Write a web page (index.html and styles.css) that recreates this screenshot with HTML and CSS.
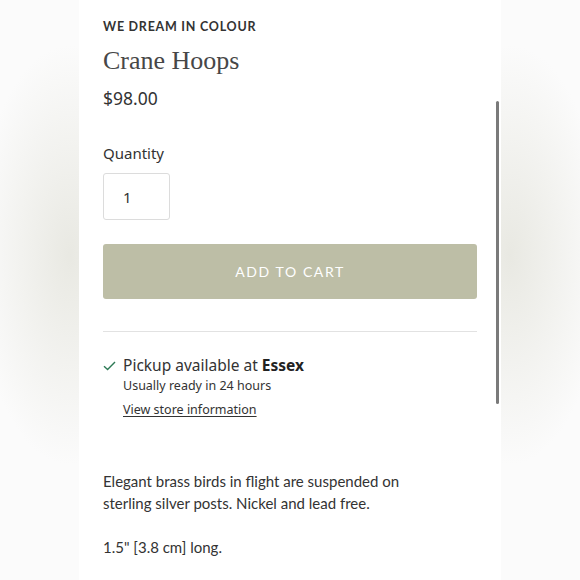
FILE: index.html
```html
<!DOCTYPE html>
<html lang="en">
<head>
<meta charset="utf-8">
<title>Crane Hoops</title>
<link rel="stylesheet" href="styles.css">
</head>
<body>
<div class="stage">
  <main class="panel">
    <p class="vendor">WE DREAM IN COLOUR</p>
    <h1 class="title">Crane Hoops</h1>
    <p class="price">$98.00</p>

    <div class="qty">
      <label class="qty-label" for="qty">Quantity</label>
      <input class="qty-input" id="qty" type="text" value="1">
    </div>

    <button class="cart-btn" type="button">ADD TO CART</button>

    <hr class="divider">

    <div class="pickup">
      <svg class="check" width="13" height="10" viewBox="0 0 13 10" aria-hidden="true">
        <path d="M1 5.2 L4.6 8.6 L12 1" fill="none" stroke="#2e7a56" stroke-width="1.4"/>
      </svg>
      <div class="pickup-text">
        <p class="pickup-title">Pickup available at <strong>Essex</strong></p>
        <p class="pickup-note">Usually ready in 24 hours</p>
        <a class="pickup-link" href="#">View store information</a>
      </div>
    </div>

    <div class="desc">
      <p>Elegant brass birds in flight are suspended on sterling silver posts. Nickel and lead free.</p>
      <p>1.5" [3.8 cm] long.</p>
    </div>
  </main>
  <div class="scrollbar" aria-hidden="true"></div>
</div>
</body>
</html>
```

FILE: styles.css
```css
html, body {
  margin: 0;
  padding: 0;
}

body {
  width: 580px;
  height: 580px;
  overflow: hidden;
  background-color: #fbfbfb;
  background-image:
    radial-gradient(ellipse 95px 210px at 70px 255px, rgba(228, 228, 220, 0.8), rgba(251, 251, 251, 0) 100%),
    radial-gradient(ellipse 95px 210px at 510px 255px, rgba(228, 228, 220, 0.8), rgba(251, 251, 251, 0) 100%);
  font-family: "Noto Sans", "Open Sans", sans-serif;
  color: #333;
}

.stage {
  position: relative;
  height: 580px;
}

.panel {
  margin-left: 79px;
  width: 422px;
  height: 580px;
  box-sizing: border-box;
  padding: 18px 24px 0 24px;
  background: #fff;
}

.vendor {
  margin: 0;
  font-family: Lato, "Liberation Sans", sans-serif;
  font-weight: 700;
  font-size: 12.5px;
  letter-spacing: 0.75px;
  line-height: 18px;
  color: #333;
}

.title {
  margin: 9px 0 0 0;
  font-family: "Liberation Serif", serif;
  font-weight: 400;
  font-size: 26px;
  line-height: 32px;
  color: #474747;
}

.price {
  margin: 10px 0 0 0;
  font-size: 17.5px;
  line-height: 22px;
  color: #333;
}

.qty {
  margin-top: 34px;
  display: flex;
  flex-direction: column;
  align-items: flex-start;
}

.qty-label {
  font-size: 15px;
  line-height: 20px;
  color: #333;
}

.qty-input {
  margin-top: 10px;
  width: 67px;
  height: 47px;
  box-sizing: border-box;
  border: 1px solid #dcdcdc;
  border-radius: 3px;
  padding: 0 0 0 19px;
  font-family: "Noto Sans", sans-serif;
  font-size: 15px;
  color: #333;
  background: #fff;
}

.cart-btn {
  display: block;
  margin-top: 24px;
  width: 100%;
  height: 55px;
  border: none;
  border-radius: 3px;
  background: #bdbea6;
  color: #fff;
  font-family: Lato, "Liberation Sans", sans-serif;
  font-size: 14px;
  font-weight: 400;
  letter-spacing: 1.6px;
}

.divider {
  margin: 32px 0 0 0;
  border: none;
  border-top: 1px solid #e2e2e2;
  height: 0;
}

.pickup {
  margin-top: 22px;
  display: flex;
  gap: 7px;
  align-items: flex-start;
}

.check {
  margin-top: 7px;
  flex: none;
}

.pickup-text {
  display: flex;
  flex-direction: column;
  align-items: flex-start;
}

.pickup-title {
  margin: 0;
  font-size: 15.5px;
  line-height: 22px;
  color: #333;
}

.pickup-title strong {
  font-weight: 700;
  color: #222;
}

.pickup-note {
  margin: 1px 0 0 0;
  font-size: 12.5px;
  line-height: 18px;
  color: #333;
}

.pickup-link {
  margin-top: 6px;
  font-size: 12.5px;
  line-height: 18px;
  color: #333;
  text-decoration: underline;
  text-underline-offset: 2px;
}

.desc {
  margin-top: 51px;
  width: 300px;
}

.desc p {
  margin: 0 0 22px 0;
  font-family: Lato, "Noto Sans", sans-serif;
  font-size: 15px;
  line-height: 22px;
  color: #333;
}

.scrollbar {
  position: absolute;
  left: 496px;
  top: 101px;
  width: 3px;
  height: 303px;
  border-radius: 2px;
  background: #7a7a7a;
}
```
